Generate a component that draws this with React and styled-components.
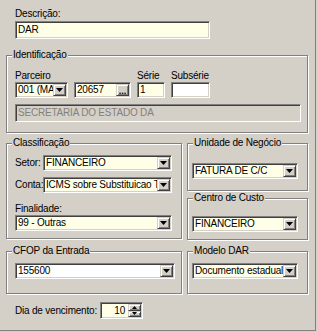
import styled, { createGlobalStyle } from "styled-components";

const Global = createGlobalStyle`
  html, body { margin: 0; padding: 0; background: #d4d0c8; }
  body {
    font-family: "Liberation Sans", Arial, sans-serif;
    font-size: 10px;
    letter-spacing: -0.2px;
    color: #000;
  }
`;

const YELLOW = "#ffffe8";

const Root = styled.div`
  box-sizing: border-box;
  width: 316px;
  height: 331px;
  border-right: 1px solid #808080;
  border-bottom: 1px solid #808080;
  padding: 8px 0 0 6px;
  display: flex;
  flex-direction: column;
`;

const Label = styled.div`
  line-height: 12px;
  white-space: nowrap;
  padding-left: ${({ $indent }) => $indent || 0}px;
  margin-top: ${({ $mt }) => $mt || 0}px;
  width: ${({ $w }) => ($w ? `${$w}px` : "auto")};
  flex-shrink: 0;
`;

const Group = styled.div`
  position: relative;
  box-sizing: border-box;
  width: ${({ $w }) => $w}px;
  height: ${({ $h }) => $h}px;
  margin-top: ${({ $mt }) => $mt || 0}px;
  padding: ${({ $pad }) => $pad};
  border: 1px solid #808080;
  box-shadow: inset 1px 1px 0 #fff, 1px 1px 0 #fff;
  display: flex;
  flex-direction: column;
`;

const Title = styled.span`
  position: absolute;
  top: -7px;
  left: 5px;
  padding: 0 1px;
  line-height: 12px;
  background: #d4d0c8;
  white-space: nowrap;
`;

const Sunken = styled.div`
  box-sizing: border-box;
  width: ${({ $w }) => $w}px;
  height: ${({ $h }) => $h || 16}px;
  margin-top: ${({ $mt }) => $mt || 0}px;
  border: 1px solid;
  border-color: #808080 #fff #fff #808080;
  box-shadow: inset 1px 1px 0 #404040, inset -1px -1px 0 #d4d0c8;
  background: ${({ $bg }) => $bg || "#fff"};
  color: ${({ $disabled }) => ($disabled ? "#84817a" : "#000")};
  padding: 1px;
  display: flex;
  align-items: stretch;
  flex-shrink: 0;
`;

const Text = styled.span`
  flex: 1;
  min-width: 0;
  overflow: hidden;
  white-space: nowrap;
  line-height: 12px;
  padding: ${({ $right }) => ($right ? "0 3px 0 0" : "0 0 0 1px")};
  text-align: ${({ $right }) => ($right ? "right" : "left")};
  align-self: center;
`;

const Btn = styled.div`
  box-sizing: border-box;
  width: 13px;
  flex-shrink: 0;
  background: #d4d0c8;
  border: 1px solid;
  border-color: #d4d0c8 #404040 #404040 #d4d0c8;
  box-shadow: inset 1px 1px 0 #fff, inset -1px -1px 0 #808080;
  display: flex;
  align-items: center;
  justify-content: center;
`;

const Dots = styled.span`
  font-weight: bold;
  font-size: 9px;
  line-height: 8px;
  letter-spacing: 0;
  margin-top: 1px;
`;

const Row = styled.div`
  display: flex;
  align-items: ${({ $align }) => $align || "flex-start"};
  gap: ${({ $gap }) => $gap || 0}px;
  margin-top: ${({ $mt }) => $mt || 0}px;
  padding-left: ${({ $indent }) => $indent || 0}px;
`;

const Field = styled.div`
  display: flex;
  flex-direction: column;
  width: ${({ $w }) => $w}px;
`;

const Column = styled.div`
  display: flex;
  flex-direction: column;
  gap: ${({ $gap }) => $gap || 0}px;
`;

const SpinCol = styled.div`
  display: flex;
  flex-direction: column;
  width: 13px;
`;

const SpinBtn = styled(Btn)`
  flex: 1;
`;

const Arrow = ({ up, size = 7 }) => {
  const h = Math.ceil(size / 2);
  return (
    <svg width={size} height={h} viewBox={`0 0 ${size} ${h}`}>
      {up ? (
        <polygon points={`0,${h} ${size},${h} ${size / 2},0`} fill="#000" />
      ) : (
        <polygon points={`0,0 ${size},0 ${size / 2},${h}`} fill="#000" />
      )}
    </svg>
  );
};

const Combo = ({ w, value, bg = YELLOW }) => (
  <Sunken $w={w} $bg={bg}>
    <Text>{value}</Text>
    <Btn>
      <Arrow />
    </Btn>
  </Sunken>
);

export default function App() {
  return (
    <>
      <Global />
      <Root>
        <Label $indent={9}>Descrição:</Label>
        <Row $mt={1} $indent={9}>
          <Sunken $w={195} $h={18} $bg={YELLOW}>
            <Text>DAR</Text>
          </Sunken>
        </Row>

        <Group $w={302} $h={78} $mt={16} $pad="14px 7px 0 8px">
          <Title>Identificação</Title>
          <Row $gap={6}>
            <Field $w={53}>
              <Label>Parceiro</Label>
              <Combo w={53} value="001 (MA)" />
            </Field>
            <Field $w={57}>
              <Label>&nbsp;</Label>
              <Sunken $w={57} $bg={YELLOW}>
                <Text>20657</Text>
                <Btn>
                  <Dots>...</Dots>
                </Btn>
              </Sunken>
            </Field>
            <Field $w={28}>
              <Label>Série</Label>
              <Sunken $w={28} $bg={YELLOW}>
                <Text>1</Text>
              </Sunken>
            </Field>
            <Field $w={39}>
              <Label>Subsérie</Label>
              <Sunken $w={39} />
            </Field>
          </Row>
          <Sunken $w={286} $h={18} $mt={6} $bg="#d4d0c8" $disabled>
            <Text>SECRETARIA DO ESTADO DA</Text>
          </Sunken>
        </Group>

        <Row $gap={5} $mt={10}>
          <Group $w={176} $h={96} $pad="11px 9px 0 8px">
            <Title>Classificação</Title>
            <Row $align="center">
              <Label $w={28}>Setor:</Label>
              <Combo w={129} value="FINANCEIRO" />
            </Row>
            <Row $align="center" $mt={6}>
              <Label $w={28}>Conta:</Label>
              <Combo w={129} value="ICMS sobre Substituicao Tributaria" />
            </Row>
            <Label $mt={10}>Finalidade:</Label>
            <Combo w={157} value="99 - Outras" />
          </Group>

          <Column $gap={7}>
            <Group $w={121} $h={48} $pad="19px 0 0 4px">
              <Title>Unidade de Negócio</Title>
              <Combo w={106} value="FATURA DE C/C" />
            </Group>
            <Group $w={121} $h={42} $pad="17px 0 0 4px">
              <Title>Centro de Custo</Title>
              <Combo w={106} value="FINANCEIRO" />
            </Group>
          </Column>
        </Row>

        <Row $gap={5} $mt={11}>
          <Group $w={176} $h={43} $pad="11px 0 0 8px">
            <Title>CFOP da Entrada</Title>
            <Combo w={160} value="155600" bg="#fff" />
          </Group>
          <Group $w={121} $h={43} $pad="11px 0 0 4px">
            <Title>Modelo DAR</Title>
            <Combo w={106} value="Documento estadual" />
          </Group>
        </Row>

        <Row $align="center" $mt={8}>
          <Label $indent={9} $w={85}>Dia de vencimento:</Label>
          <Sunken $w={43} $h={17} $bg={YELLOW}>
            <Text $right>10</Text>
            <SpinCol>
              <SpinBtn>
                <Arrow up size={5} />
              </SpinBtn>
              <SpinBtn>
                <Arrow size={5} />
              </SpinBtn>
            </SpinCol>
          </Sunken>
        </Row>
      </Root>
    </>
  );
}
